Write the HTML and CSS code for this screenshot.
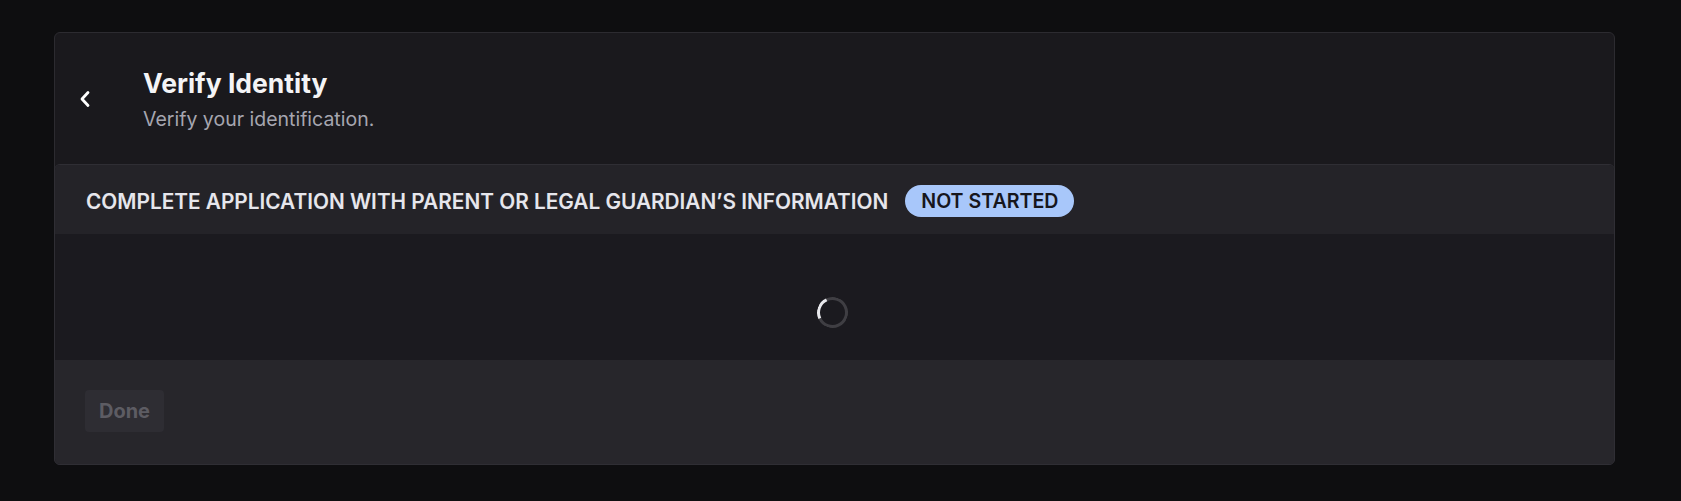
FILE: index.html
```html
<!DOCTYPE html>
<html lang="en">
<head>
<meta charset="utf-8">
<title>Verify Identity</title>
<link rel="stylesheet" href="styles.css">
</head>
<body>
<div class="card">
  <header class="card-header">
    <button class="back" aria-label="Back">
      <svg width="14" height="18" viewBox="0 0 14 18" fill="none"><path d="M10 2.5 L4 9 L10 15.5" stroke="#ffffff" stroke-width="2.8" stroke-linecap="round" stroke-linejoin="round"/></svg>
    </button>
    <div class="titles">
      <h1 class="title">Verify Identity</h1>
      <p class="subtitle">Verify your identification.</p>
    </div>
  </header>
  <section class="step">
    <div class="step-head">
      <span class="step-title">COMPLETE APPLICATION WITH PARENT OR LEGAL GUARDIAN’S INFORMATION</span>
      <span class="badge">NOT STARTED</span>
    </div>
    <div class="step-body">
      <div class="spinner"></div>
    </div>
    <div class="step-foot">
      <button class="done" disabled>Done</button>
    </div>
  </section>
</div>
</body>
</html>
```
FILE: styles.css
```css
* { box-sizing: border-box; }
html, body { margin: 0; padding: 0; }
body {
  background: #0e0e10;
  font-family: Inter, "Noto Sans", "Liberation Sans", sans-serif;
  padding: 32px 66px 0 54px;
}
.card {
  width: 1561px;
  height: 433px;
  border: 1px solid #2c2b30;
  border-radius: 6px;
  background: #1a191d;
  display: flex;
  flex-direction: column;
}
.card-header {
  height: 131px;
  display: flex;
  align-items: center;
  padding-left: 20px;
  padding-top: 2px;
}
.back {
  background: none;
  border: 0;
  padding: 0;
  width: 20px;
  height: 20px;
  display: flex;
  align-items: center;
  justify-content: center;
  margin-right: 48px;
  margin-top: -1px;
}
.titles { display: flex; flex-direction: column; }
.title {
  margin: 0;
  font-size: 26.5px;
  font-weight: 700;
  color: #f4f4f6;
  line-height: 32px;
}
.subtitle {
  margin: 7px 0 0;
  font-size: 19.5px;
  color: #a6a6b0;
  line-height: 26px;
}
.step {
  flex: 1;
  margin: 0 -1px -1px;
  border: 1px solid #2f2e34;
  border-radius: 6px;
  overflow: hidden;
  display: flex;
  flex-direction: column;
}
.step-head {
  height: 69px;
  background: #242328;
  display: flex;
  align-items: center;
  padding-left: 31px;
  padding-top: 3px;
  gap: 17px;
}
.step-title {
  font-size: 20.8px;
  font-weight: 600;
  color: #e6e6ec;
}
.badge {
  height: 32px;
  padding: 0 16px;
  border-radius: 16px;
  background: #a8c7fa;
  color: #16161c;
  font-size: 19.6px;
  font-weight: 600;
  display: flex;
  align-items: center;
}
.step-body {
  height: 126px;
  background: #1b1a1f;
  display: flex;
  align-items: center;
  justify-content: center;
  padding-top: 30px;
}
.spinner {
  width: 31px;
  height: 31px;
  border-radius: 50%;
  border: 3px solid rgba(255,255,255,0.16);
  border-left-color: #e8e8ec;
  transform: rotate(20deg);
  margin-left: -4px;
}
.step-foot {
  flex: 1;
  background: #27262b;
  padding: 30px 30px;
}
.done {
  width: 79px;
  height: 42px;
  border: 0;
  border-radius: 4px;
  background: #2e2d33;
  color: #5d5c63;
  font-family: inherit;
  font-size: 20px;
  font-weight: 700;
}
```
